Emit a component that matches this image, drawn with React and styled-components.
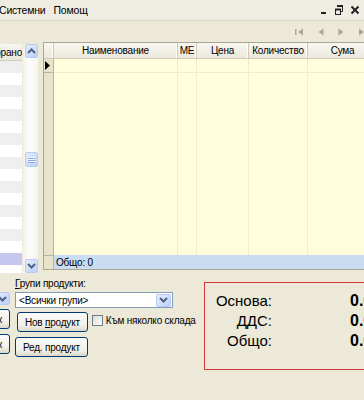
import React from "react";
import styled, { createGlobalStyle } from "styled-components";

const GlobalStyle = createGlobalStyle`
  html, body { margin: 0; padding: 0; background: #ece9d8; }
  body {
    font-family: "Liberation Sans", Arial, sans-serif;
    font-size: 10px;
    letter-spacing: -0.2px;
    color: #000;
  }
`;

const COLS = "10px 124px 19px 52px 59px 70px";

const Window = styled.div`
  width: 364px;
  height: 400px;
  overflow: hidden;
  display: flex;
  flex-direction: column;
  background: #ece9d8;
`;

const MenuBar = styled.div`
  height: 21px;
  box-sizing: border-box;
  display: flex;
  align-items: center;
  background: #efede3;
  border-bottom: 1px solid #dcd8c5;
  font-size: 10.5px;
`;

const MenuItem = styled.span`
  padding: 0 4px;
  &:first-child { padding-left: 0; margin-left: -1px; }
`;

const WinControls = styled.div`
  margin-left: auto;
  display: flex;
  align-items: center;
  gap: 6px;
  padding-right: 4px;
`;

const Toolbar = styled.div`
  height: 21px;
  display: flex;
  align-items: center;
  justify-content: flex-end;
  gap: 14px;
  margin-right: -3px;
`;

const Main = styled.div`
  height: 230px;
  display: flex;
  align-items: flex-start;
`;

const ListPane = styled.div`
  width: 22px;
  height: 229px;
  margin-top: 2px;
  display: flex;
  flex-direction: column;
  overflow: hidden;
  background: #fff;
  flex: none;
`;

const ListHeader = styled.div`
  height: 17px;
  flex: none;
  display: flex;
  align-items: center;
  justify-content: flex-end;
  white-space: nowrap;
  background: linear-gradient(#f7f6f0, #e9e7da);
  border-bottom: 1px solid #d0ccbb;
  box-sizing: border-box;
`;

const ListRow = styled.div`
  height: 12px;
  flex: none;
  background: ${p => (p.$selected ? "#c6c6ee" : p.$odd ? "#ffffff" : "#efefef")};
`;

const ScrollBar = styled.div`
  width: 15px;
  height: 229px;
  margin: 2px 0 0 1px;
  flex: none;
  display: flex;
  flex-direction: column;
  align-items: flex-end;
  background: linear-gradient(90deg, #f3f1ea, #fdfdfa 40%, #f6f5ef);
`;

const ScrollBtn = styled.div`
  width: 13px;
  height: 14px;
  box-sizing: border-box;
  border: 1px solid #b7cbf5;
  border-radius: 2px;
  background: linear-gradient(135deg, #e6eefd, #bccff8);
  display: flex;
  align-items: center;
  justify-content: center;
  flex: none;
`;

const Thumb = styled(ScrollBtn)`
  height: 15px;
  margin: ${p => p.$top}px 0 auto;
`;

const Grid = styled.div`
  width: 321px;
  height: 228px;
  margin-left: 5px;
  flex: none;
  box-sizing: border-box;
  border: 1px solid #aaa690;
  border-right: none;
  display: flex;
  flex-direction: column;
  overflow: hidden;
  background: #fefedc;
`;

const HeadRow = styled.div`
  height: 16px;
  flex: none;
  display: grid;
  grid-template-columns: ${COLS};
  background: linear-gradient(#f8f7f1, #ebe9dc);
  border-bottom: 1px solid #cdc9b6;
  box-sizing: border-box;
`;

const HeadCell = styled.div`
  display: flex;
  align-items: center;
  justify-content: center;
  white-space: nowrap;
  border-right: 1px solid #cdc9b6;
  box-shadow: inset -1px 0 0 #fff;
`;

const Body = styled.div`
  flex: 1;
  display: grid;
  grid-template-columns: ${COLS};
  grid-template-rows: 14px 1fr;
`;

const Cell = styled.div`
  border-right: 1px solid ${p => (p.$rowHead ? "#b8b49c" : "#efecc9")};
  border-bottom: ${p => (p.$first ? `1px solid ${p.$rowHead ? "#b8b49c" : "#efecc9"}` : "none")};
  background: ${p => (p.$rowHead ? "#e8e4cc" : "transparent")};
  display: flex;
  align-items: center;
  padding-left: 1px;
`;

const FootRow = styled.div`
  height: 14px;
  flex: none;
  display: grid;
  grid-template-columns: 10px 1fr;
`;

const FootHead = styled.div`
  background: #e8e4cc;
  border-right: 1px solid #b8b49c;
  border-top: 1px solid #b8b49c;
`;

const FootCell = styled.div`
  background: #c8dcf2;
  padding-left: 2px;
  display: flex;
  align-items: center;
`;

const Bottom = styled.div`
  flex: 1;
  display: flex;
  align-items: flex-start;
`;

const Stub = styled.div`
  width: 10px;
  flex: none;
  overflow: hidden;
  display: flex;
  flex-direction: column;
  align-items: flex-end;
  margin-top: 20px;
`;

const Groups = styled.div`
  width: 158px;
  flex: none;
  margin-left: 5px;
  display: flex;
  flex-direction: column;
`;

const Label = styled.div`
  margin-top: 6px;
  height: 12px;
  line-height: 12px;
`;

const Combo = styled.div`
  height: 16px;
  margin-top: 2px;
  box-sizing: border-box;
  border: 1px solid #7f9db9;
  background: #fff;
  display: flex;
  align-items: center;
  padding: 0 1px 0 3px;
`;

const ComboText = styled.span`
  flex: 1;
  white-space: nowrap;
`;

const DropBtn = styled(ScrollBtn)`
  width: 15px;
  height: 13px;
`;

const LowerRow = styled.div`
  display: flex;
  align-items: flex-start;
  margin-top: 4px;
`;

const BtnCol = styled.div`
  width: 75px;
  display: flex;
  flex-direction: column;
  align-items: flex-end;
  gap: 5px;
`;

const Button = styled.div`
  height: 20px;
  padding: 0 7px;
  box-sizing: border-box;
  border: 1px solid #003c74;
  border-radius: 3px;
  background: linear-gradient(#fbfbf9, #f0efe8 70%, #dcd9c9);
  display: flex;
  align-items: center;
  justify-content: center;
  white-space: nowrap;
  flex: none;
  margin-top: ${p => p.$mt || 0}px;
`;

const CheckWrap = styled.label`
  display: flex;
  align-items: center;
  gap: 3px;
  margin: 3px 0 0 4px;
  white-space: nowrap;
`;

const CheckBox = styled.span`
  width: 11px;
  height: 11px;
  box-sizing: border-box;
  border: 1px solid #6d7d8e;
  background: linear-gradient(135deg, #dcdcd6, #fdfdfb);
`;

const TotalsBox = styled.div`
  margin: 10px 0 0 31px;
  width: 170px;
  height: 88px;
  flex: none;
  box-sizing: border-box;
  border: 1px solid #d43a3a;
  border-right: none;
  padding-top: 8px;
  display: grid;
  grid-template-columns: 67px 1fr;
  column-gap: 78px;
  grid-auto-rows: 20px;
  font-size: 15px;
  letter-spacing: 0;
  line-height: 20px;
  overflow: hidden;
`;

const TotalLabel = styled.div`
  text-align: right;
`;

const TotalValue = styled.div`
  font-weight: bold;
  font-size: 16px;
  white-space: nowrap;
`;

const Chevron = ({ up }) => (
  <svg width="9" height="6" viewBox="0 0 9 6">
    <polyline
      points={up ? "1,5 4.5,1.5 8,5" : "1,1 4.5,4.5 8,1"}
      fill="none"
      stroke="#4d6185"
      strokeWidth="2"
    />
  </svg>
);

const Grip = () => (
  <svg width="7" height="6" viewBox="0 0 7 6">
    <path d="M0 0.5h7M0 2.5h7M0 4.5h7" stroke="#eef3fe" strokeWidth="1" />
    <path d="M0 1.5h7M0 3.5h7M0 5.5h7" stroke="#8fa8e0" strokeWidth="1" />
  </svg>
);

const Minimize = () => (
  <svg width="8" height="10" viewBox="0 0 8 10">
    <rect x="1" y="7" width="5" height="2" fill="#222" />
  </svg>
);

const Restore = () => (
  <svg width="10" height="10" viewBox="0 0 10 10">
    <path d="M3.5 1.5h5v5h-2" fill="none" stroke="#222" strokeWidth="1" />
    <path d="M3 1h6" stroke="#222" strokeWidth="2" />
    <rect x="1.5" y="4.5" width="5" height="5" fill="none" stroke="#222" strokeWidth="1" />
    <path d="M1 4.5h6" stroke="#222" strokeWidth="2" />
  </svg>
);

const Close = () => (
  <svg width="10" height="10" viewBox="0 0 10 10">
    <path d="M1.5 1.5l7 7M8.5 1.5l-7 7" stroke="#222" strokeWidth="2" />
  </svg>
);

const NavIcon = ({ kind }) => {
  const c = "#aaa89a";
  if (kind === "first")
    return (
      <svg width="9" height="8" viewBox="0 0 9 8">
        <rect x="0" y="1" width="1.5" height="6" fill={c} />
        <polygon points="8,0.5 8,7.5 3,4" fill={c} />
      </svg>
    );
  if (kind === "prev")
    return (
      <svg width="6" height="8" viewBox="0 0 6 8">
        <polygon points="5.5,0.5 5.5,7.5 0.5,4" fill={c} />
      </svg>
    );
  if (kind === "next")
    return (
      <svg width="6" height="8" viewBox="0 0 6 8">
        <polygon points="0.5,0.5 0.5,7.5 5.5,4" fill={c} />
      </svg>
    );
  return (
    <svg width="9" height="8" viewBox="0 0 9 8">
      <polygon points="1,0.5 1,7.5 6,4" fill={c} />
      <rect x="7" y="1" width="1.5" height="6" fill={c} />
    </svg>
  );
};

const RowMark = () => (
  <svg width="5" height="9" viewBox="0 0 5 9">
    <polygon points="0,0 5,4.5 0,9" fill="#000" />
  </svg>
);

const headers = ["", "Наименование", "МЕ", "Цена", "Количество", "Сума"];

export default function App() {
  const rows = Array.from({ length: 18 }, (_, i) => i);
  return (
    <Window>
      <GlobalStyle />
      <MenuBar>
        <MenuItem>Системни</MenuItem>
        <MenuItem>Помощ</MenuItem>
        <WinControls>
          <Minimize />
          <Restore />
          <Close />
        </WinControls>
      </MenuBar>
      <Toolbar>
        <NavIcon kind="first" />
        <NavIcon kind="prev" />
        <NavIcon kind="next" />
        <NavIcon kind="last" />
      </Toolbar>
      <Main>
        <ListPane>
          <ListHeader>Избрано</ListHeader>
          {rows.map(i => (
            <ListRow key={i} $odd={i % 2 === 1} $selected={i === 16} />
          ))}
        </ListPane>
        <ScrollBar>
          <ScrollBtn>
            <Chevron up />
          </ScrollBtn>
          <Thumb $top={94}>
            <Grip />
          </Thumb>
          <ScrollBtn>
            <Chevron />
          </ScrollBtn>
        </ScrollBar>
        <Grid>
          <HeadRow>
            {headers.map((h, i) => (
              <HeadCell key={i}>{h}</HeadCell>
            ))}
          </HeadRow>
          <Body>
            {headers.map((h, i) => (
              <Cell key={"a" + i} $first $rowHead={i === 0}>
                {i === 0 && <RowMark />}
              </Cell>
            ))}
            {headers.map((h, i) => (
              <Cell key={"b" + i} $rowHead={i === 0} />
            ))}
          </Body>
          <FootRow>
            <FootHead />
            <FootCell>Общо: 0</FootCell>
          </FootRow>
        </Grid>
      </Main>
      <Bottom>
        <Stub>
          <DropBtn>
            <Chevron />
          </DropBtn>
          <Button $mt={4}>Добави в списък</Button>
          <Button $mt={5}>Изтрий от списък</Button>
        </Stub>
        <Groups>
          <Label>
            <u>Г</u>рупи продукти:
          </Label>
          <Combo>
            <ComboText>{"<Всички групи>"}</ComboText>
            <DropBtn>
              <Chevron />
            </DropBtn>
          </Combo>
          <LowerRow>
            <BtnCol>
              <Button>
                Нов&nbsp;<u>п</u>родукт
              </Button>
              <Button>
                Ред. прод<u>у</u>кт
              </Button>
            </BtnCol>
            <CheckWrap>
              <CheckBox />
              Към няколко склада
            </CheckWrap>
          </LowerRow>
        </Groups>
        <TotalsBox>
          <TotalLabel>Основа:</TotalLabel>
          <TotalValue>0.00</TotalValue>
          <TotalLabel>ДДС:</TotalLabel>
          <TotalValue>0.00</TotalValue>
          <TotalLabel>Общо:</TotalLabel>
          <TotalValue>0.00</TotalValue>
        </TotalsBox>
      </Bottom>
    </Window>
  );
}
